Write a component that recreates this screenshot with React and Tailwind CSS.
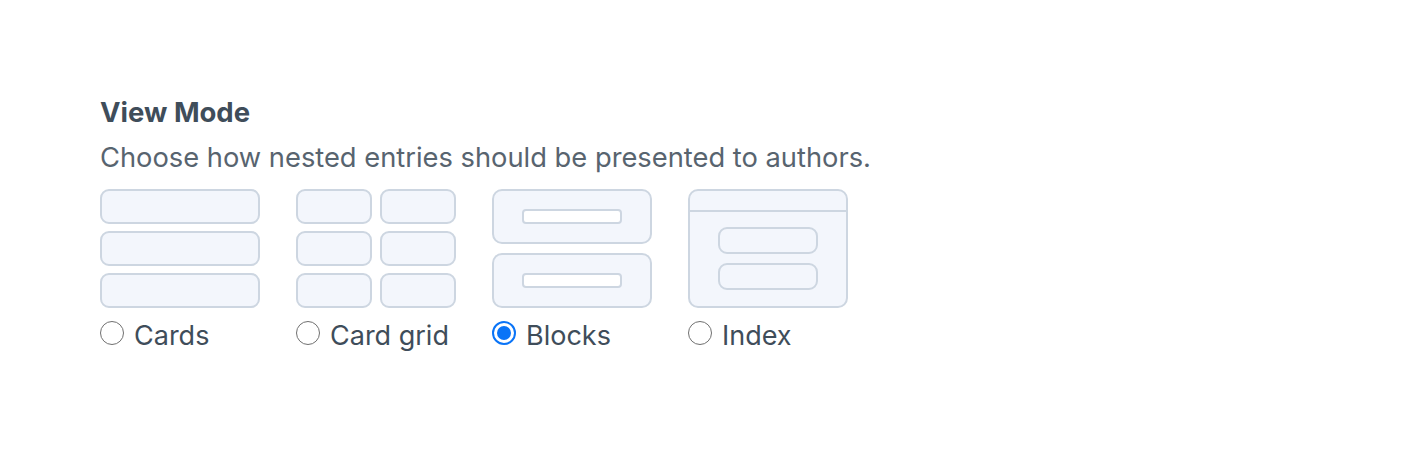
import React, { useState } from 'react';

const stroke = '#cdd6e1';
const fill = '#f3f6fc';

const CardsIcon = () => (
  <svg width="160" height="120" viewBox="0 0 160 120">
    {[1, 43, 85].map((y) => (
      <rect key={y} x="1" y={y} width="158" height="33" rx="8" fill={fill} stroke={stroke} strokeWidth="2" />
    ))}
  </svg>
);

const GridIcon = () => (
  <svg width="160" height="120" viewBox="0 0 160 120">
    {[1, 43, 85].map((y) => (
      <g key={y}>
        <rect x="1" y={y} width="74" height="33" rx="8" fill={fill} stroke={stroke} strokeWidth="2" />
        <rect x="85" y={y} width="74" height="33" rx="8" fill={fill} stroke={stroke} strokeWidth="2" />
      </g>
    ))}
  </svg>
);

const BlocksIcon = () => (
  <svg width="160" height="120" viewBox="0 0 160 120">
    {[1, 65].map((y) => (
      <g key={y}>
        <rect x="1" y={y} width="158" height="53" rx="9" fill={fill} stroke={stroke} strokeWidth="2" />
        <rect x="31" y={y + 20} width="98" height="13" rx="3" fill="#ffffff" stroke={stroke} strokeWidth="2" />
      </g>
    ))}
  </svg>
);

const IndexIcon = () => (
  <svg width="160" height="120" viewBox="0 0 160 120">
    <rect x="1" y="1" width="158" height="117" rx="9" fill={fill} stroke={stroke} strokeWidth="2" />
    <line x1="1" y1="22" x2="159" y2="22" stroke={stroke} strokeWidth="2" />
    <rect x="31" y="39" width="98" height="25" rx="8" fill={fill} stroke={stroke} strokeWidth="2" />
    <rect x="31" y="75" width="98" height="25" rx="8" fill={fill} stroke={stroke} strokeWidth="2" />
  </svg>
);

const modes = [
  { id: 'cards', label: 'Cards', Icon: CardsIcon },
  { id: 'grid', label: 'Card grid', Icon: GridIcon },
  { id: 'blocks', label: 'Blocks', Icon: BlocksIcon },
  { id: 'index', label: 'Index', Icon: IndexIcon },
];

const Radio = ({ checked }) =>
  checked ? (
    <span className="mt-[4px] w-[24px] h-[24px] shrink-0 rounded-full border-[2.5px] border-[#0a74f7] bg-white flex items-center justify-center">
      <span className="w-[14px] h-[14px] rounded-full bg-[#0a74f7]"></span>
    </span>
  ) : (
    <span className="mt-[4px] w-[24px] h-[24px] shrink-0 rounded-full border-[1.5px] border-[#707070] bg-white"></span>
  );

export default function App() {
  const [mode, setMode] = useState('blocks');

  return (
    <div className="min-h-[454px] bg-white pt-[93px] pl-[100px]" style={{ fontFamily: 'Inter, "Noto Sans", sans-serif' }}>
      <h3 className="text-[27.5px] leading-[39px] font-bold text-[#3f4d5a]">View Mode</h3>
      <p className="mt-[6px] text-[27.3px] leading-[39px] text-[#58646f]">
        Choose how nested entries should be presented to authors.
      </p>
      <div className="mt-[12px] flex gap-[36px]">
        {modes.map(({ id, label, Icon }) => (
          <label key={id} className="w-[160px] flex flex-col cursor-pointer" onClick={() => setMode(id)}>
            <Icon />
            <div className="mt-[8px] flex items-start gap-[10px]">
              <Radio checked={mode === id} />
              <span className="mt-[4px] text-[27px] leading-[30px] text-[#3f4d5a] whitespace-nowrap">{label}</span>
            </div>
          </label>
        ))}
      </div>
    </div>
  );
}
